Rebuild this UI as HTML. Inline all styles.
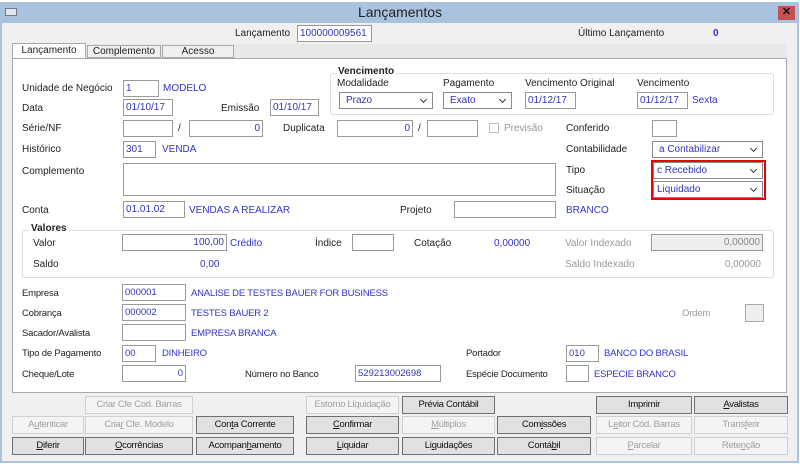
<!DOCTYPE html>
<html><head><meta charset="utf-8"><style>
*{box-sizing:border-box;margin:0;padding:0}
body{width:800px;height:467px;background:#fff;font-family:"Liberation Sans",sans-serif;font-size:10px;color:#222;position:relative;overflow:hidden}
.a{position:absolute;white-space:nowrap}
.win{position:absolute;left:0;top:2px;width:799px;height:461px;background:#f0f0f0;border:2px solid #a9c3df;border-top:none}
.tb{position:absolute;left:0;top:2px;width:799px;height:21px;background:#a9c3df}
.in{position:absolute;background:#fff;border:1px solid #9a9a9a;height:17px;color:#3333bb;padding:2px 2px;line-height:11px}
.r{text-align:right}
.v{color:#3333cc}
.g{color:#999}
.sel{position:absolute;background:#fff;border:1px solid #8a8a8a;height:17px;color:#3333bb;padding:2px 6px;line-height:11px}
.sel:after{content:"";position:absolute;right:6px;top:4px;width:4px;height:4px;border-right:1.3px solid #333;border-bottom:1.3px solid #333;transform:rotate(45deg)}
.grp{position:absolute;border:1px solid #dcdcdc;border-radius:3px}
.b{position:absolute;height:18px;border:1px solid #707070;background:#e1e1e1;text-align:center;line-height:16px;font-size:9.5px;letter-spacing:-.3px;color:#111}
.d{border-color:#cfcfcf;background:#f4f4f4;color:#a0a0a0}
.lb{position:absolute;white-space:nowrap;font-size:9.5px;letter-spacing:-.2px}
</style></head><body>
<div class="win"></div>
<div class="tb"></div>
<div class="a" style="left:5px;top:8px;width:12px;height:8px;background:#dfe7ef;border:1px solid #778"></div>
<div class="a" style="left:0;width:800px;top:4px;text-align:center;font-size:14px;color:#222">Lançamentos</div>
<div class="a" style="left:778px;top:6px;width:17px;height:14px;background:#c75050;color:#111;font-size:11px;font-weight:bold;text-align:center;line-height:13px">✕</div>

<div class="a" style="left:235px;top:28px">Lançamento</div>
<div class="in" style="left:297px;top:25px;width:75px">100000009561</div>
<div class="a" style="left:578px;top:28px">Último Lançamento</div>
<div class="a v" style="left:713px;top:28px;font-weight:bold">0</div>

<div class="a" style="left:12px;top:44px;width:775px;height:14px;background:#e8e8e8"></div>
<div class="a" style="left:12px;top:43px;width:74px;height:16px;background:#fff;border:1px solid #aaa;border-bottom:none;text-align:center;line-height:14px">Lançamento</div>
<div class="a" style="left:87px;top:45px;width:74px;height:13px;background:#f0f0f0;border:1px solid #aaa;text-align:center;line-height:11px">Complemento</div>
<div class="a" style="left:162px;top:45px;width:72px;height:13px;background:#f0f0f0;border:1px solid #aaa;text-align:center;line-height:11px">Acesso</div>
<div class="a" style="left:12px;top:58px;width:775px;height:335px;background:#fff;border:1px solid #aaa"></div>

<div class="grp" style="left:330px;top:73px;width:444px;height:42px"></div>
<div class="a" style="left:336px;top:66px;background:#fff;padding:0 2px;font-weight:bold">Vencimento</div>
<div class="a" style="left:337px;top:78px">Modalidade</div>
<div class="sel" style="left:339px;top:92px;width:94px">Prazo</div>
<div class="a" style="left:443px;top:78px">Pagamento</div>
<div class="sel" style="left:443px;top:92px;width:69px">Exato</div>
<div class="a" style="left:525px;top:78px">Vencimento Original</div>
<div class="in" style="left:525px;top:92px;width:51px">01/12/17</div>
<div class="a" style="left:637px;top:78px">Vencimento</div>
<div class="in" style="left:637px;top:92px;width:51px">01/12/17</div>
<div class="a v" style="left:692px;top:95px">Sexta</div>

<div class="a" style="left:22px;top:83px">Unidade de Negócio</div>
<div class="in" style="left:123px;top:80px;width:36px">1</div>
<div class="a v" style="left:163px;top:83px">MODELO</div>
<div class="a" style="left:22px;top:103px">Data</div>
<div class="in" style="left:123px;top:99px;width:50px">01/10/17</div>
<div class="a" style="left:221px;top:103px">Emissão</div>
<div class="in" style="left:270px;top:99px;width:49px">01/10/17</div>

<div class="a" style="left:22px;top:123px">Série/NF</div>
<div class="in" style="left:123px;top:120px;width:50px"></div>
<div class="a" style="left:178px;top:123px">/</div>
<div class="in r" style="left:189px;top:120px;width:74px">0</div>
<div class="a" style="left:283px;top:123px">Duplicata</div>
<div class="in r" style="left:337px;top:120px;width:76px">0</div>
<div class="a" style="left:418px;top:123px">/</div>
<div class="in" style="left:427px;top:120px;width:51px"></div>
<div class="a" style="left:489px;top:123px;width:10px;height:10px;border:1px solid #bbb"></div>
<div class="a g" style="left:504px;top:123px">Previsão</div>
<div class="a" style="left:566px;top:123px">Conferido</div>
<div class="in" style="left:652px;top:120px;width:25px"></div>

<div class="a" style="left:22px;top:144px">Histórico</div>
<div class="in" style="left:123px;top:141px;width:33px">301</div>
<div class="a v" style="left:162px;top:144px">VENDA</div>
<div class="a" style="left:566px;top:144px">Contabilidade</div>
<div class="sel" style="left:652px;top:141px;width:111px">a Contabilizar</div>

<div class="a" style="left:22px;top:166px">Complemento</div>
<div class="in" style="left:123px;top:163px;width:433px;height:33px"></div>
<div class="a" style="left:566px;top:165px">Tipo</div>
<div class="a" style="left:566px;top:185px">Situação</div>
<div class="a" style="left:651px;top:160px;width:115px;height:40px;border:2px solid #e00"></div>
<div class="sel" style="left:653px;top:162px;width:110px;padding-left:3px">c Recebido</div>
<div class="sel" style="left:653px;top:181px;width:110px;padding-left:3px">Liquidado</div>

<div class="a" style="left:22px;top:205px">Conta</div>
<div class="in" style="left:123px;top:201px;width:62px">01.01.02</div>
<div class="a v" style="left:189px;top:205px">VENDAS A REALIZAR</div>
<div class="a" style="left:400px;top:205px">Projeto</div>
<div class="in" style="left:454px;top:201px;width:102px"></div>
<div class="a v" style="left:566px;top:205px">BRANCO</div>

<div class="grp" style="left:22px;top:230px;width:752px;height:48px"></div>
<div class="a" style="left:29px;top:223px;background:#fff;padding:0 2px;font-weight:bold">Valores</div>
<div class="a" style="left:33px;top:238px">Valor</div>
<div class="in r" style="left:122px;top:234px;width:105px">100,00</div>
<div class="a v" style="left:230px;top:238px">Crédito</div>
<div class="a" style="left:315px;top:238px">Índice</div>
<div class="in" style="left:352px;top:234px;width:42px"></div>
<div class="a" style="left:414px;top:238px">Cotação</div>
<div class="a v" style="left:494px;top:238px">0,00000</div>
<div class="a g" style="left:565px;top:238px">Valor Indexado</div>
<div class="in r" style="left:651px;top:234px;width:112px;background:#eee;color:#888">0,00000</div>
<div class="a" style="left:33px;top:259px">Saldo</div>
<div class="a v" style="left:200px;top:259px">0,00</div>
<div class="a g" style="left:565px;top:259px">Saldo Indexado</div>
<div class="a g r" style="left:680px;top:259px;width:81px">0,00000</div>

<div class="lb" style="left:22px;top:288px">Empresa</div>
<div class="in" style="left:122px;top:284px;width:64px;font-size:9.5px">000001</div>
<div class="lb v" style="left:191px;top:288px">ANALISE DE TESTES BAUER FOR BUSINESS</div>
<div class="lb" style="left:22px;top:308px">Cobrança</div>
<div class="in" style="left:122px;top:304px;width:64px;font-size:9.5px">000002</div>
<div class="lb v" style="left:191px;top:308px">TESTES BAUER 2</div>
<div class="lb g" style="left:682px;top:308px">Ordem</div>
<div class="a" style="left:745px;top:304px;width:19px;height:18px;background:#eee;border:1px solid #aaa"></div>
<div class="lb" style="left:22px;top:328px">Sacador/Avalista</div>
<div class="in" style="left:122px;top:324px;width:64px"></div>
<div class="lb v" style="left:191px;top:328px">EMPRESA BRANCA</div>
<div class="lb" style="left:22px;top:348px">Tipo de Pagamento</div>
<div class="in" style="left:122px;top:345px;width:34px;font-size:9.5px">00</div>
<div class="lb v" style="left:162px;top:348px">DINHEIRO</div>
<div class="lb" style="left:466px;top:348px">Portador</div>
<div class="in" style="left:566px;top:345px;width:33px;font-size:9.5px">010</div>
<div class="lb v" style="left:604px;top:348px">BANCO DO BRASIL</div>
<div class="lb" style="left:22px;top:369px">Cheque/Lote</div>
<div class="in r" style="left:122px;top:365px;width:64px;font-size:9.5px">0</div>
<div class="lb" style="left:245px;top:369px">Número no Banco</div>
<div class="in" style="left:355px;top:365px;width:86px;font-size:9.5px">529213002698</div>
<div class="lb" style="left:466px;top:369px">Espécie Documento</div>
<div class="in" style="left:566px;top:365px;width:23px"></div>
<div class="lb v" style="left:594px;top:369px">ESPECIE BRANCO</div>

<div class="b d" style="left:85px;top:396px;width:108px">Criar Cfe Cod. Barras</div>
<div class="b d" style="left:306px;top:396px;width:93px">Estorno Liquidação</div>
<div class="b" style="left:402px;top:396px;width:93px">Prévia Contábil</div>
<div class="b" style="left:596px;top:396px;width:96px">Imprimir</div>
<div class="b" style="left:694px;top:396px;width:94px"><u>A</u>valistas</div>

<div class="b d" style="left:12px;top:416px;width:72px">A<u>u</u>tenticar</div>
<div class="b d" style="left:85px;top:416px;width:108px">Cria<u>r</u> Cfe. Modelo</div>
<div class="b" style="left:196px;top:416px;width:98px">Con<u>t</u>a Corrente</div>
<div class="b" style="left:306px;top:416px;width:93px"><u>C</u>onfirmar</div>
<div class="b d" style="left:402px;top:416px;width:93px"><u>M</u>últiplos</div>
<div class="b" style="left:497px;top:416px;width:94px">Com<u>i</u>ssões</div>
<div class="b d" style="left:596px;top:416px;width:96px">L<u>e</u>itor Cód. Barras</div>
<div class="b d" style="left:694px;top:416px;width:94px">Trans<u>f</u>erir</div>

<div class="b" style="left:12px;top:437px;width:72px"><u>D</u>iferir</div>
<div class="b" style="left:85px;top:437px;width:108px"><u>O</u>corrências</div>
<div class="b" style="left:196px;top:437px;width:98px">Acompan<u>h</u>amento</div>
<div class="b" style="left:306px;top:437px;width:93px"><u>L</u>iquidar</div>
<div class="b" style="left:402px;top:437px;width:93px">Li<u>q</u>uidações</div>
<div class="b" style="left:497px;top:437px;width:94px">Contá<u>b</u>il</div>
<div class="b d" style="left:596px;top:437px;width:96px"><u>P</u>arcelar</div>
<div class="b d" style="left:694px;top:437px;width:94px">Rete<u>n</u>ção</div>
</body></html>
